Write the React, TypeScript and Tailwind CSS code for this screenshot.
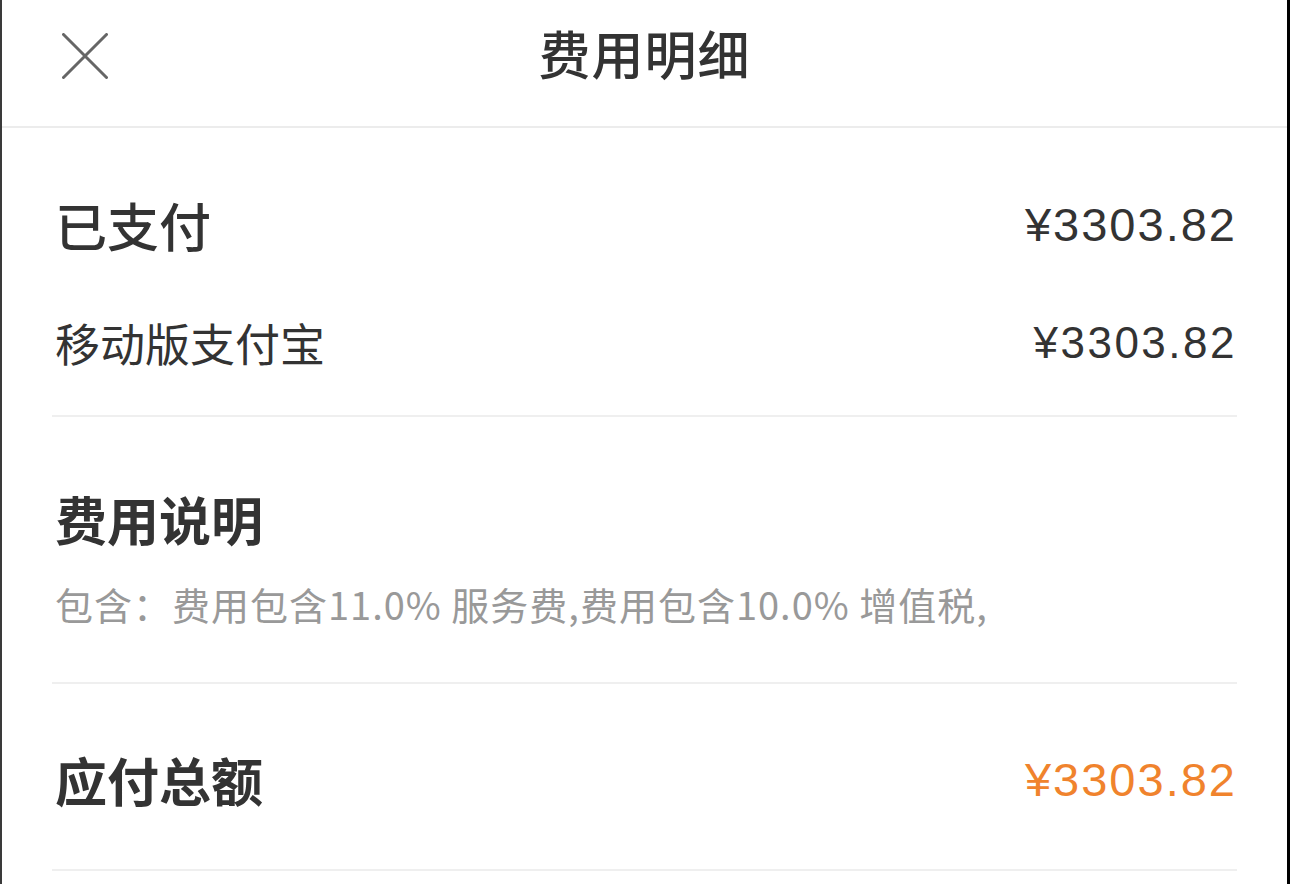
import React from 'react';

const cjk = { fontFamily: '"Noto Sans CJK SC", "Noto Sans", sans-serif' };
const num = { fontFamily: '"Liberation Sans", Arial, sans-serif' };

const CloseIcon = () => (
  <svg width="46" height="46" viewBox="0 0 46 46" fill="none">
    <path d="M1.5 1.5 L44.5 44.5 M44.5 1.5 L1.5 44.5" stroke="#666" strokeWidth="3" strokeLinecap="round" />
  </svg>
);

export default function App() {
  return (
    <div className="w-[1290px] h-[884px] bg-white overflow-hidden border-l-2 border-l-[#3a3a3a] border-r-[3px] border-r-black text-[#333]" style={cjk}>
      {/* header */}
      <div className="h-[128px] grid grid-cols-[1fr_auto_1fr] items-center border-b-2 border-[#ececec]">
        <div className="pl-[60px] pb-[14px]">
          <CloseIcon />
        </div>
        <h1 className="text-[52px] font-medium leading-none pb-[20px] tracking-[1px]">费用明细</h1>
        <div />
      </div>

      <div className="mx-[50px]">
        {/* paid */}
        <div className="pt-[67px] pb-[47px] border-b-2 border-[#efefef]">
          <div className="flex items-center justify-between h-[60px] pl-[3px]">
            <span className="text-[52px] font-medium">已支付</span>
            <span className="text-[47px] tracking-[2px]" style={num}>¥3303.82</span>
          </div>
          <div className="flex items-center justify-between h-[50px] mt-[63px] pl-[3px]">
            <span className="text-[45px]">移动版支付宝</span>
            <span className="text-[44px] tracking-[2.5px]" style={num}>¥3303.82</span>
          </div>
        </div>

        {/* description */}
        <div className="pt-[72px] pb-[59px] border-b-2 border-[#efefef]">
          <div className="h-[60px] flex items-center pl-[3px]">
            <span className="text-[52px] font-semibold">费用说明</span>
          </div>
          <div className="h-[40px] flex items-center mt-[34px] pl-[3px] text-[38px] tracking-[1px] text-[#999]">
            包含：费用包含11.0% 服务费,费用包含10.0% 增值税,
          </div>
        </div>

        {/* total */}
        <div className="pt-[66px] pb-[59px] border-b-2 border-[#efefef]">
          <div className="flex items-center justify-between h-[60px] pl-[3px]">
            <span className="text-[52px] font-semibold">应付总额</span>
            <span className="text-[47px] tracking-[2px] text-[#f0832d]" style={num}>¥3303.82</span>
          </div>
        </div>
      </div>
    </div>
  );
}
